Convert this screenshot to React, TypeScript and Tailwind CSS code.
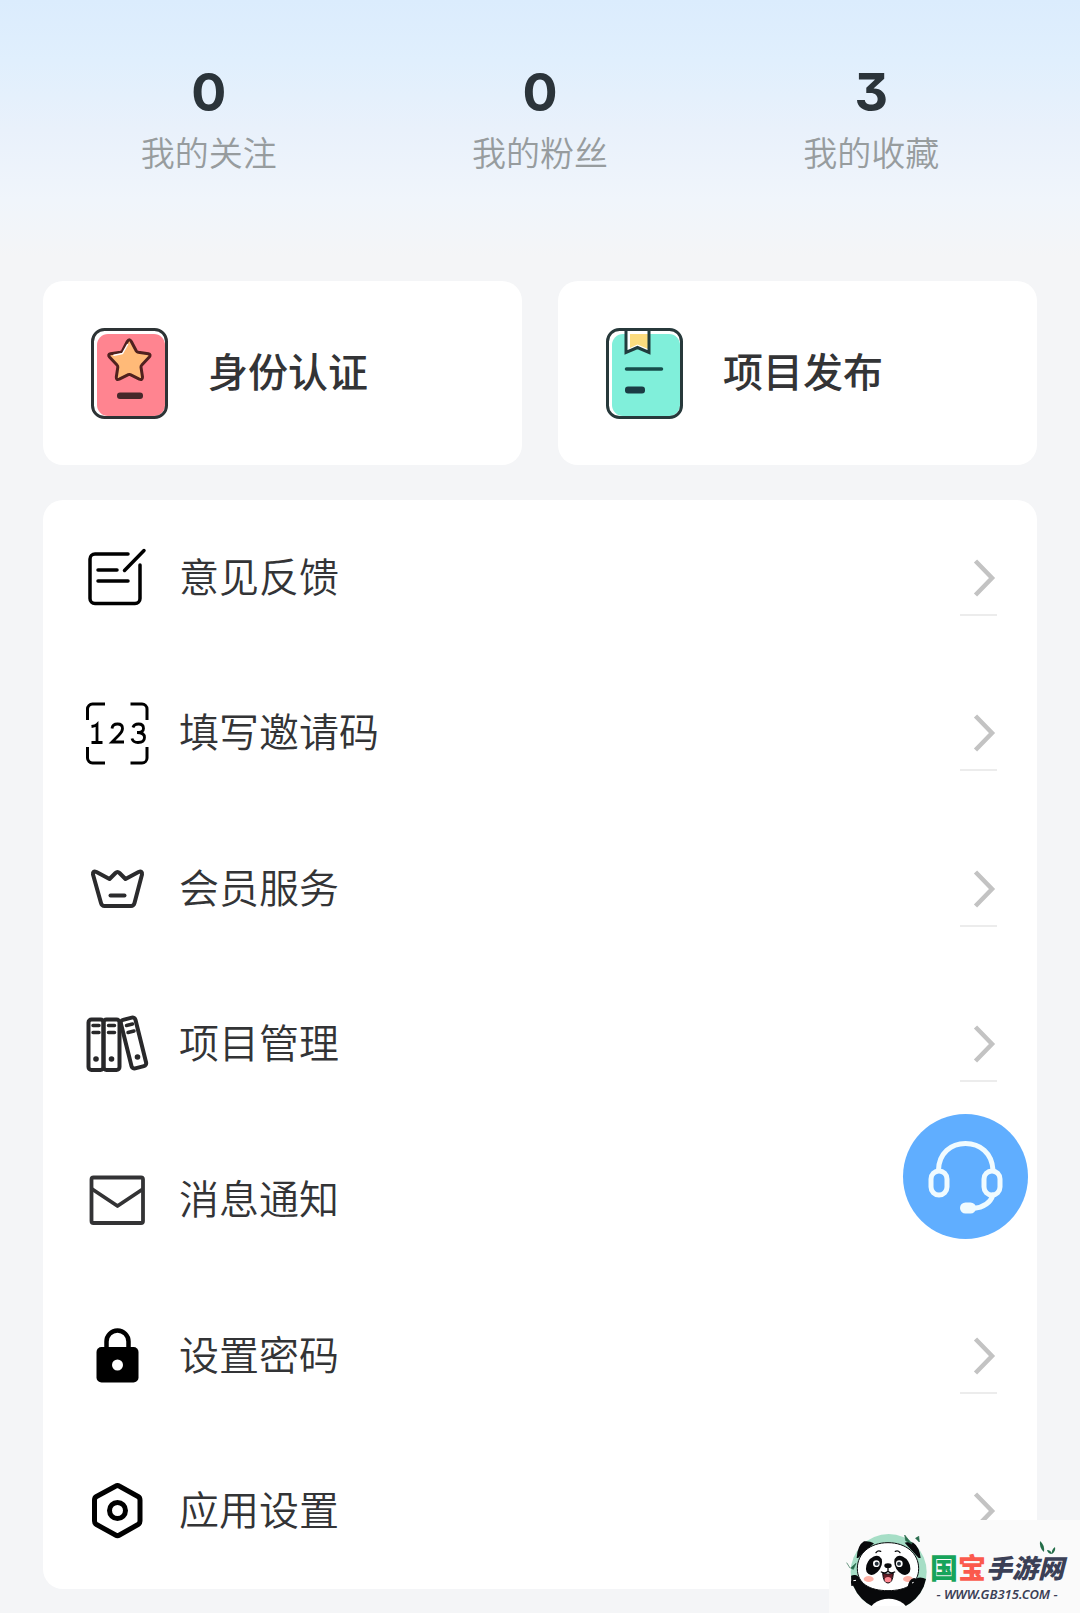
import React from "react";

const stats = [
  { label: "我的关注", value: 0 },
  { label: "我的粉丝", value: 0 },
  { label: "我的收藏", value: 3 },
];

const IdentityIcon = () => (
  <svg className="w-[77px] h-[91px] shrink-0" viewBox="0 0 77 91" fill="none" aria-hidden="true">
    <rect x="1.5" y="1.5" width="74" height="88" rx="12" fill="#fff" />
    <path d="M17 6h46a11 11 0 0 1 11 11v60a11 11 0 0 1-11 11H17A11 11 0 0 1 6 77V17A11 11 0 0 1 17 6z" fill="#ff8490" />
    <rect x="1.5" y="1.5" width="74" height="88" rx="12" stroke="#2d3335" strokeWidth="3" />
    <path
      d="M36.300 13.500q2-3.500 4 0l5 9.500q.6 1 2 1.300l10 1.500q3 .8 1 3.200l-7.500 8q-1 1-.8 2.300l1.500 9.700q0 3.500-3.200 2.200l-9-4.500q-1-.5-2 0l-9 4.500q-3.200 1.300-3-2.200l1.500-9.700q.2-1.300-.8-2.300l-7.500-8q-2-2.400 1-3.200l10-1.500q1.400-.3 2-1.300z"
      fill="#ffba78"
      stroke="#4f211f"
      strokeWidth="3"
      strokeLinejoin="round"
    />
    <path d="M36.500 16.500l-5 9-8.500 1.800" stroke="#fff" strokeWidth="1.500" strokeLinecap="round" strokeLinejoin="round" />
    <rect x="26" y="64.500" width="26" height="6.500" rx="3" fill="#46282a" />
  </svg>
);

const PublishIcon = () => (
  <svg className="w-[77px] h-[91px] shrink-0" viewBox="0 0 77 91" fill="none" aria-hidden="true">
    <rect x="1.500" y="1.500" width="74" height="88" rx="12" fill="#fff" />
    <path d="M17 6h46a11 11 0 0 1 11 11v60a11 11 0 0 1-11 11H17A11 11 0 0 1 6 77V17A11 11 0 0 1 17 6z" fill="#80efda" />
    <path d="M20 2h23v22l-11.500-5L20 24z" fill="#fff" />
    <path d="M24 6h18v15l-10.500-4.500L24 20z" fill="#fbdc7f" />
    <path d="M20 2v22.500l11.500-5 11.500 5V2" stroke="#203c3d" strokeWidth="3" />
    <rect x="1.500" y="1.500" width="74" height="88" rx="12" stroke="#27393b" strokeWidth="3" />
    <path d="M20.500 41h35" stroke="#164d4b" strokeWidth="3.500" strokeLinecap="round" />
    <rect x="19" y="58.500" width="20" height="7" rx="3" fill="#1b3b44" />
  </svg>
);

const FeedbackIcon = () => (
  <g stroke="#000" strokeWidth="3.500" strokeLinecap="round">
    <path d="M43 8H10a5 5 0 0 0-5 5v39.500a5 5 0 0 0 5 5h40a5 5 0 0 0 5-5V19" />
    <path d="M39.500 24.500L59 4.500M13 24h19M13 35h30" />
  </g>
);

const InviteIcon = () => (
  <>
    <path
      d="M2.500 19V8a5 5 0 0 1 5-5h12.500M45.500 3H57a5 5 0 0 1 5 5v11M62 46v11a5 5 0 0 1-5 5H45.500M20 62H7.500a5 5 0 0 1-5-5V46"
      stroke="#000"
      strokeWidth="3"
    />
    <g stroke="#000" strokeWidth="2.800" strokeLinecap="butt">
      <path d="M6.500 25.500q4-.5 5.500-2v18M6.500 41.500h11" />
      <path d="M27 27.500q.5-4.500 5.500-4.500t5 4.500q0 3-3.500 6.500l-7 7h12" />
      <path d="M48 26.500q1-3.500 5.500-3.500 5 0 5 4.500 0 4-6.500 4 7.500 0 7.500 5 0 5-6.500 5-5 0-6-4" />
    </g>
  </>
);

const CrownIcon = () => (
  <g stroke="#2b2b2d" strokeWidth="4" strokeLinecap="round" strokeLinejoin="round">
    <path d="M11.500 15l13 7 6-6q2-2 4 0l6 6 13-7q4-1.500 3.500 2.500l-7.500 28.500q-.8 3-3.500 3H19.500q-2.700 0-3.500-3L8 17.500q-.5-4 3.500-2.500z" />
    <path d="M25.500 38.500h14" />
  </g>
);

const BindersIcon = () => (
  <>
    <g stroke="#28282a" strokeWidth="4" strokeLinecap="round" strokeLinejoin="round">
      <rect x="3.500" y="7.500" width="15" height="50.500" rx="3" />
      <rect x="18.500" y="7.500" width="16" height="50.500" rx="3" />
      <rect x="41" y="6" width="15" height="50" rx="3" transform="rotate(-14 48.500 31)" />
      <path d="M8 13.500h6M8 20.500h6M23.500 13.500h6M23.500 20.500h6M41.500 13.500l6-1.500M43 20.500l6-1.500" strokeWidth="3.500" />
    </g>
    <g fill="#28282a">
      <circle cx="11" cy="47" r="2.800" />
      <circle cx="26.500" cy="47" r="2.800" />
      <circle cx="52.500" cy="45" r="2.800" />
    </g>
  </>
);

const MailIcon = () => (
  <g stroke="#333335" strokeWidth="3.800" strokeLinejoin="round">
    <rect x="6.500" y="9.500" width="51.500" height="45.500" rx="2" />
    <path d="M7 21l25.500 17L58 21" />
  </g>
);

const LockIcon = () => (
  <>
    <path d="M21.500 27V17.500a11 11 0 0 1 22 0V27" stroke="#000" strokeWidth="4.500" />
    <rect x="11.500" y="23" width="42" height="35.500" rx="5" fill="#000" />
    <circle cx="32.500" cy="41" r="5.500" fill="#fff" />
  </>
);

const SettingsIcon = () => (
  <g stroke="#000" strokeWidth="5" strokeLinejoin="round">
    <path d="M30.500 7.200q2-1.200 4 0L53 17.500q2 1.200 2 3.500v21q0 2.300-2 3.500L34.500 56q-2 1.200-4 0L11.500 45.500q-2-1.200-2-3.500V21q0-2.300 2-3.500z" />
    <circle cx="32.500" cy="31.500" r="8" />
  </g>
);

const menu = [
  { label: "意见反馈", Icon: FeedbackIcon },
  { label: "填写邀请码", Icon: InviteIcon },
  { label: "会员服务", Icon: CrownIcon },
  { label: "项目管理", Icon: BindersIcon },
  { label: "消息通知", Icon: MailIcon, plain: true },
  { label: "设置密码", Icon: LockIcon },
  { label: "应用设置", Icon: SettingsIcon },
];

const PandaLogo = () => (
  <svg className="w-[86px] h-20 shrink-0" viewBox="0 0 258 240" fill="none" aria-hidden="true">
    <defs>
      <clipPath id="badge">
        <path d="M0 0h258v228H0z" />
      </clipPath>
      <clipPath id="disc">
        <circle cx="134" cy="126" r="114" />
      </clipPath>
    </defs>
    <g clipPath="url(#badge)">
      <circle cx="134" cy="126" r="114" fill="#a6dec6" />
      <g clipPath="url(#disc)">
        <path d="M20 138q20-10 32 14 22 28 82 28t74-26q14-20 40-6v92H20z" fill="#08090b" />
        <ellipse cx="134" cy="256" rx="62" ry="50" fill="#fff" />
      </g>
    </g>
    <path d="M38 84q2-38 22-50 16-2 30 6L42 84zM230 84q-4-34-22-46-14-4-26 0l42 46z" fill="#08090b" />
    <path d="M132 38c54 0 92 32 92 78 0 44-36 66-92 66s-92-22-92-66c0-46 38-78 92-78z" fill="#fff" stroke="#08090b" strokeWidth="3" />
    <ellipse cx="90" cy="106" rx="21" ry="31" transform="rotate(32 90 106)" fill="#08090b" />
    <ellipse cx="175" cy="106" rx="21" ry="31" transform="rotate(-32 175 106)" fill="#08090b" />
    <circle cx="97" cy="101" r="10" fill="#fff" />
    <circle cx="166" cy="101" r="10" fill="#fff" />
    <circle cx="98" cy="101" r="6" fill="#28333c" />
    <circle cx="165" cy="101" r="6" fill="#28333c" />
    <path d="M96 68q6-8 14-4M154 64q8-4 14 4" stroke="#08090b" strokeWidth="4" strokeLinecap="round" />
    <ellipse cx="74" cy="147" rx="15" ry="9" fill="#ffb3a7" />
    <ellipse cx="192" cy="147" rx="15" ry="9" fill="#ffb3a7" />
    <ellipse cx="132" cy="107" rx="11" ry="7" fill="#08090b" />
    <path d="M132 112v12M112 126q12 6 20-2 8 8 20 2" stroke="#08090b" strokeWidth="4" strokeLinecap="round" />
    <path d="M116 130q16 5 32 0-2 29-16 29t-16-29z" fill="#631c25" stroke="#08090b" strokeWidth="3" />
    <ellipse cx="132" cy="149" rx="10" ry="8" fill="#ff8993" />
    <path d="M22 168q-4-30 10-32 14 2 16 28M190 176q4-30 20-32 18 2 22 28" fill="#08090b" />
    <path d="M182 15l22 27-19-10zM214 24l12 12-2-18M20 114l16-14-8 18zM8 98l10 16" fill="#286b4c" stroke="#286b4c" strokeWidth="2" />
    <path d="M28 152l8-1M204 159l5-2" stroke="#fff" strokeWidth="3" />
  </svg>
);

const Watermark = () => (
  <div className="absolute bottom-0 right-0 flex items-end bg-[#fafafa] w-[251px] h-[93px] pl-[15px] pb-[3px]">
    <PandaLogo />
    <div className="relative flex flex-col items-start whitespace-nowrap pb-2">
      <svg className="absolute -top-3 right-[6px] w-5 h-4" viewBox="0 0 20 16" fill="#246d49" aria-hidden="true">
        <path d="M2 1q5 4 4 11Q1 8 2 1zM9 10q4 0 5 4-4 0-5-4zM17 7q1 4-3 7-1-4 3-7z" />
      </svg>
      <p className="flex items-center leading-[34px] font-black text-[#3b4056]">
        <span className="text-[28px] text-[#16a45b]">国</span>
        <span className="text-[28px] text-[#fb5a4d]">宝</span>
        <span className="text-[26px] italic">手游网</span>
      </p>
      <p className="w-full text-center font-['Noto_Sans'] italic font-semibold text-[13px] leading-4 text-[#3b4056]">- WWW.GB315.COM -</p>
    </div>
  </div>
);

const App = () => {
  return (
    <div className="relative min-h-screen overflow-hidden bg-[#f4f5f7] bg-[linear-gradient(#dbecfd_0px,#e0effd_60px,#e9f1fb_130px,#f0f5fb_200px,#f4f5f7_256px)] px-[43px] pt-[67px] pb-6 font-[Inter,'Noto_Sans_CJK_SC',sans-serif] text-[#333436]">
      <header className="grid grid-cols-3 text-center">
        {stats.map(({ label, value }) => (
          <a key={label} href="#" className="flex flex-col gap-[18px]">
            <span className="text-[52px] leading-[52px] font-bold text-[#2b343a] [font-feature-settings:'cv09']">{value}</span>
            <span className="text-[34px] leading-[34px] font-[350] text-[#979c9e]">{label}</span>
          </a>
        ))}
      </header>

      <main>
        <div className="mt-[110px] grid grid-cols-2 gap-9">
          <button className="flex items-center gap-10 rounded-[20px] bg-white pl-12 h-[184px] text-[40px] leading-[48px] font-medium">
            <IdentityIcon />
            <span>身份认证</span>
          </button>
          <button className="flex items-center gap-10 rounded-[20px] bg-white pl-12 h-[184px] text-[40px] leading-[48px] font-medium">
            <PublishIcon />
            <span>项目发布</span>
          </button>
        </div>

        <nav className="mt-[35px] grid auto-rows-fr min-h-[1089px] rounded-[20px] bg-white">
          {menu.map(({ label, Icon, plain }) => (
            <a key={label} href="#" className="flex items-center pl-[42px] pr-10">
              <svg className="w-16 h-16 shrink-0" viewBox="0 0 64 64" fill="none" aria-hidden="true">
                <Icon />
              </svg>
              <span className="ml-[30px] grow text-[40px] leading-[48px] font-[350]">{label}</span>
              {!plain && (
                <span className="flex h-[76px] w-[37px] items-center justify-end border-b-2 border-[#ececec]">
                  <svg className="w-6 h-10" viewBox="0 0 24 40" fill="none" aria-hidden="true">
                    <path d="M2.500 4l16.500 17L2.500 38" stroke="#c3c3c3" strokeWidth="4.500" />
                  </svg>
                </span>
              )}
            </a>
          ))}
        </nav>
      </main>

      {/* floating customer service entry */}
      <button
        aria-label="客服"
        className="absolute right-[52px] top-[1114px] flex size-[125px] items-center justify-center rounded-full bg-[#60aeff]"
      >
        <svg className="w-20 h-20" viewBox="0 0 80 80" fill="none" stroke="#f0fbff" strokeWidth="5" strokeLinecap="round" aria-hidden="true">
          <path d="M12.500 33C13 16 25 6.500 39.500 6.500S66 16 67 33" />
          <rect x="5" y="34" width="16" height="24" rx="8" />
          <rect x="58" y="34" width="16" height="24" rx="8" />
          <path d="M67 58q-4 12-20 13.500" />
          <rect x="36.500" y="68" width="11" height="6" rx="3" fill="#f0fbff" />
        </svg>
      </button>

      <Watermark />
    </div>
  );
};

export default App;
